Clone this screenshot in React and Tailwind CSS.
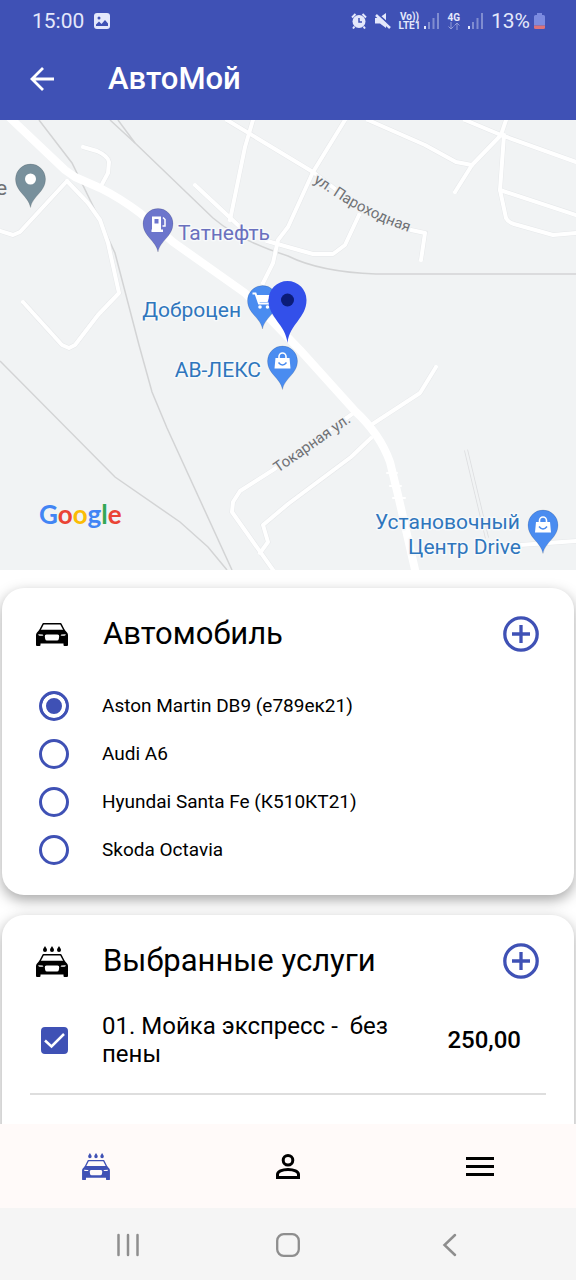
import React, { useState } from 'react';

const cars = [
  { id: 1, name: 'Aston Martin DB9 (е789ек21)' },
  { id: 2, name: 'Audi A6' },
  { id: 3, name: 'Hyundai Santa Fe (К510КТ21)' },
  { id: 4, name: 'Skoda Octavia' },
];

const services = [{ id: 1, name: '01. Мойка экспресс -  без пены', price: '250,00' }];

// Второстепенные улицы на карте
const roads = [
  'M67 61L20 112L13 115L0 111',
  'M67 61L88 83L100 100L108 123L119 173L98 195L75 225L69 228L62 225L23 182',
  'M83 27L97 31Q108 36 109 42L108 53L101 66',
  'M253 0L245 27L230 100',
  'M195 65L240 107M267 121L288 127L313 134L333 134L345 125L359 95',
  'M227 0L313 52L360 88L411 110L425 113L421 140',
  'M345 0L313 52L288 107L278 120L273 143L263 163',
  'M368 0L425 25L456 42L472 45',
  'M506 0L501 15L472 45L455 72',
  'M465 0L501 15L576 42',
  'M504 15L500 70L506 98Q508 102 514 104L553 115L576 113',
  'M500 70L576 95',
  'M436 247L420 273L371 305',
  'M371 318L351 337L288 384L263 405L268 422L260 433',
  'M355 292L273 350L240 371L233 382L232 392L273 450',
  'M520 425L576 421',
];

// Железная дорога
const rails = [
  'M39 0L72 43L95 90L115 133L139 225L152 272L167 308L232 450',
  'M110 0L135 23L213 98Q240 121 288 136Q320 152 376 154L576 154',
  'M118 0L135 23',
  'M0 241L115 357L180 402L208 427L227 450',
];

function CarShape() {
  return (
    <>
      <path d="M7.200 0.800H24.800L28.500 8H3.500Z" fill="none" stroke="currentColor" strokeWidth="1.500" strokeLinejoin="round" />
      <path
        fillRule="evenodd"
        fill="currentColor"
        d="M3.500 6.800H28.500L31 9.500Q32 10.500 32 12V22Q32 23 31 23H28.500Q27.500 23 27.500 22V20.500H4.500V22Q4.500 23 3.500 23H1Q0 23 0 22V12Q0 10.500 1 9.500ZM2.200 11.200L2.800 12.600Q5 13 7.300 12.600Q7.500 11.800 6.500 11.400ZM29.800 11.200L29.200 12.600Q27 13 24.700 12.600Q24.500 11.800 25.500 11.400ZM10.500 11.500Q8.600 11.500 8.800 13.500L9.200 16Q9.500 17.500 11 17.500H21Q22.500 17.500 22.800 16L23.200 13.500Q23.400 11.500 21.500 11.500Z"
      />
    </>
  );
}

function CarIcon({ className }) {
  return (
    <svg viewBox="0 0 32 23" className={className} aria-hidden="true">
      <CarShape />
    </svg>
  );
}

function WashIcon({ className }) {
  return (
    <svg viewBox="0 0 32 31" className={className} aria-hidden="true">
      {[9, 16, 23].map((x) => (
        <path key={x} transform={`translate(${x} 0)`} fill="currentColor" d="M0 0C0.600 1.300 2 2.500 2 3.900A2 2 0 0 1-2 3.900C-2 2.500-0.600 1.300 0 0Z" />
      ))}
      <g transform="translate(0 8)">
        <CarShape />
      </g>
    </svg>
  );
}

function SignalIcon() {
  return (
    <svg viewBox="0 0 15 16" className="h-4 w-[15px]" fill="currentColor" aria-hidden="true">
      <path d="M0 13h2v3H0z" />
      <path d="M4 9h2v7H4zM8.500 5h2v11h-2zM13 0h2v16h-2z" opacity="0.400" />
    </svg>
  );
}

function StatusBar() {
  return (
    <div className="flex h-[42px] items-center justify-between pr-[31px] pl-8 text-[#e4e8fb]">
      <div className="flex items-center gap-[10px]">
        <span className="text-[21px] leading-6">15:00</span>
        <svg viewBox="0 0 16 16" className="size-4" aria-hidden="true">
          <rect width="16" height="16" rx="3" fill="currentColor" />
          <circle cx="5" cy="5" r="1.500" fill="#3f51b5" />
          <path d="M2 13V11.500L5 8.500L7.500 11L11 7L14 10.500V13Z" fill="#3f51b5" />
        </svg>
      </div>
      <div className="flex items-center gap-2">
        <svg viewBox="0 0 16 16" className="size-4" aria-hidden="true">
          <path d="M1 4.500L4.500 1M15 4.500L11.500 1M3.500 13.500L2 15.500M12.500 13.500L14 15.500" stroke="currentColor" strokeWidth="2" />
          <circle cx="8" cy="8.500" r="6.500" fill="currentColor" />
          <path d="M8 5V9H11" fill="none" stroke="#3f51b5" strokeWidth="1.500" />
        </svg>
        <svg viewBox="0 0 16 16" className="size-4" aria-hidden="true">
          <path d="M0 5H4L11 0V15L5 10.500H0Z" fill="currentColor" />
          <path d="M2 0.500L16 13" stroke="#3f51b5" strokeWidth="2" />
          <path d="M1 2L15 15" stroke="currentColor" strokeWidth="2.500" />
        </svg>
        <div className="flex items-center gap-1">
          <div className="flex flex-col items-center text-[10px] leading-[9px] font-bold">
            <span>Vo))</span>
            <span>LTE1</span>
          </div>
          <SignalIcon />
        </div>
        <div className="flex flex-col items-center text-[10px] leading-[9px] font-bold">
          <span>4G</span>
          <svg viewBox="0 0 12 8" className="h-2 w-3" fill="none" stroke="currentColor" opacity="0.500" aria-hidden="true">
            <path d="M3 0V7M0.500 4.500L3 7L5.500 4.500M9 8V1M6.500 3.500L9 1L11.500 3.500" />
          </svg>
        </div>
        <SignalIcon />
        <div className="flex items-center gap-1">
          <span className="text-[21px] leading-6">13%</span>
          <svg viewBox="0 0 11 16" className="h-4 w-[11px]" aria-hidden="true">
            <path d="M3 0H8V2H9.500Q11 2 11 3.500V12.500H0V3.500Q0 2 1.500 2H3Z" fill="#7c8be0" />
            <path d="M0 12.500H11V14.500Q11 16 9.500 16H1.500Q0 16 0 14.500Z" fill="#dd7378" />
          </svg>
        </div>
      </div>
    </div>
  );
}

function Pin({ x, y, color, children }) {
  return (
    <g transform={`translate(${x} ${y})`}>
      <path
        d="M0 28.500C-2 17-15 13-15 0A15 15 0 1 1 15 0C15 13 2 17 0 28.500Z"
        fill={color}
        stroke="#000"
        strokeOpacity="0.150"
        strokeWidth="0.800"
      />
      {children}
    </g>
  );
}

function Bag() {
  return (
    <>
      <path d="M-3.500-3V-4.500A3.500 3.500 0 0 1 3.500-4.500V-3" fill="none" stroke="#fff" strokeWidth="1.600" />
      <path d="M-7-3H7L8 7.500H-8Z" fill="#fff" />
      <path d="M-4 1.500Q0 6.500 4 1.500" fill="none" stroke="#4a8cf0" strokeWidth="1.500" />
    </>
  );
}

function Map() {
  return (
    <svg viewBox="0 0 576 450" className="block w-full bg-[#f1f3f4]" role="img" aria-label="Карта">
      <g fill="none" stroke="#d3d4d5" strokeWidth="1.500">
        {rails.map((d) => (
          <path key={d} d={d} />
        ))}
      </g>
      <g fill="none" stroke="#e6e8ea" strokeWidth="5">
        {roads.map((d) => (
          <path key={d} d={d} />
        ))}
        <path d="M466 330L487 418" stroke="#dcdddf" strokeWidth="4" />
      </g>
      <g fill="none" stroke="#fff" strokeWidth="4" strokeLinecap="round" strokeLinejoin="round">
        {roads.map((d) => (
          <path key={d} d={d} />
        ))}
        <path d="M466 330L487 418" stroke="#f1f3f4" strokeWidth="2.500" />
        <path d="M8-4L65 50L75 57L100 68Q120 78 140 93L173 122L245 173L300 230L355 291Q380 314 390 342L398 375L416 454" strokeWidth="8" />
        <path d="M387 353h10M390 366h11M393 378h12" strokeWidth="2" />
      </g>

      <path id="parohodnaya" d="M313 62L339 79Q373 101 421 116" fill="none" />
      <g fontSize="15" fill="#6f7174" stroke="#f1f3f4" strokeWidth="3" strokeLinejoin="round" className="[paint-order:stroke]">
        <text>
          <textPath href="#parohodnaya">ул. Пароходная</textPath>
        </text>
        <text transform="translate(278 353) rotate(-35)">Токарная ул.</text>
        <text x="-4" y="75" fontSize="21">е</text>
      </g>

      <g fontSize="21" fill="#2f76bd" stroke="#f7f9fa" strokeWidth="3" strokeLinejoin="round" className="[paint-order:stroke]">
        <text x="178" y="120" fill="#6a70be">Татнефть</text>
        <text x="241" y="197" textAnchor="end">Доброцен</text>
        <text x="261" y="257" textAnchor="end">АВ-ЛЕКС</text>
        <text x="520" y="409" textAnchor="end">Установочный</text>
        <text x="521" y="434" textAnchor="end">Центр Drive</text>
      </g>

      <Pin x={30.5} y={59} color="#78909c">
        <circle r="5.500" fill="#fff" />
      </Pin>
      <Pin x={158} y={103.500} color="#6c75cc">
        <path fillRule="evenodd" fill="#fff" d="M-6-7H3V6H5V8.500H-6.500V6H-6ZM-3.500-4.500V0H0.500V-4.500Z" />
        <path d="M5-6L7-4V2.500H4.500" fill="none" stroke="#fff" strokeWidth="1.500" />
      </Pin>
      <Pin x={262.500} y={180.500} color="#4a8cf0">
        <path d="M-10-7H-7L-3.500 3H7" fill="none" stroke="#fff" strokeWidth="2" />
        <path d="M-6.500-5.500H8L5 1.500H-4Z" fill="#fff" />
        <circle cx="-2.500" cy="6.500" r="1.800" fill="#fff" />
        <circle cx="5" cy="6.500" r="1.800" fill="#fff" />
      </Pin>
      <Pin x={282.500} y={241} color="#4a8cf0">
        <Bag />
      </Pin>
      <Pin x={543} y={405} color="#4a8cf0">
        <Bag />
      </Pin>
      <g transform="translate(287.500 180)">
        <path d="M0 43C-2 24-19 18-19 0A19 19 0 1 1 19 0C19 18 2 24 0 43Z" fill="#3350ea" />
        <circle r="6.500" fill="#0b1c78" />
      </g>

      <text x="39" y="404" fontSize="26" fontWeight="700" className="font-['Lato',sans-serif]">
        <tspan fill="#4285f4">G</tspan>
        <tspan fill="#ea4335">o</tspan>
        <tspan fill="#fbbc05">o</tspan>
        <tspan fill="#4285f4">g</tspan>
        <tspan fill="#34a853">l</tspan>
        <tspan fill="#ea4335">e</tspan>
      </text>
    </svg>
  );
}

function Card({ icon, title, addLabel, children }) {
  return (
    <section className="mx-[2px] rounded-[22px] bg-white px-7 pt-7 shadow-[0_5px_14px_rgba(0,0,0,0.350)]">
      <div className="flex items-center gap-[35px] pr-[7px] pb-[30px] pl-[6px]">
        {icon}
        <h2 className="flex-1 text-[31px] leading-9">{title}</h2>
        <button type="button" aria-label={addLabel} className="text-[#3f51b5]">
          <svg viewBox="0 0 36 36" className="size-9" fill="none" stroke="currentColor" strokeWidth="3.300" aria-hidden="true">
            <circle cx="18" cy="18" r="16.200" />
            <path d="M18 9V27M9 18H27" />
          </svg>
        </button>
      </div>
      {children}
    </section>
  );
}

export default function App() {
  const [carId, setCarId] = useState(1);
  const [selected, setSelected] = useState([1]);

  const toggleService = (id) => {
    setSelected(selected.includes(id) ? selected.filter((s) => s !== id) : [...selected, id]);
  };

  return (
    <div className="flex h-dvh flex-col bg-white font-['Roboto',sans-serif] text-black">
      {/* Шапка */}
      <header className="bg-[#3f51b5] text-white">
        <StatusBar />
        <div className="flex h-[78px] items-center gap-[54px] px-[30px] pb-1">
          <button type="button" aria-label="Назад">
            <svg viewBox="0 0 24 24" className="size-6" fill="none" stroke="currentColor" strokeWidth="2.800" aria-hidden="true">
              <path d="M24 12H2M13 1L2 12L13 23" />
            </svg>
          </button>
          <h1 className="text-[31px] leading-9 font-medium">АвтоМой</h1>
        </div>
      </header>

      <main className="min-h-0 flex-1 overflow-y-auto [scrollbar-width:none]">
        <Map />

        <div className="flex flex-col gap-5 pt-[18px]">
          {/* Автомобиль */}
          <Card icon={<CarIcon className="h-[23px] w-8" />} title="Автомобиль" addLabel="Добавить автомобиль">
            <div className="pb-[21px]">
              {cars.map((car) => (
                <label key={car.id} className="flex h-12 items-center gap-[33px] pl-[9px] text-[19px] leading-6">
                  <input
                    type="radio"
                    name="car"
                    checked={carId === car.id}
                    onChange={() => setCarId(car.id)}
                    className="size-[30px] appearance-none rounded-full border-[3px] border-[#3f51b5] checked:bg-[#3f51b5] checked:shadow-[inset_0_0_0_4px_white]"
                  />
                  {car.name}
                </label>
              ))}
            </div>
          </Card>

          {/* Выбранные услуги */}
          <Card icon={<WashIcon className="h-[31px] w-8" />} title="Выбранные услуги" addLabel="Добавить услугу">
            <ul className="pb-20">
              {services.map((service) => (
                <li key={service.id} className="border-b-2 border-[#dedede] pt-[3px] pb-[25px]">
                  <label className="flex items-center gap-[34px] pr-[25px] pl-[11px] text-2xl leading-7">
                    <span className="grid size-[27px] shrink-0">
                      <input
                        type="checkbox"
                        checked={selected.includes(service.id)}
                        onChange={() => toggleService(service.id)}
                        className="peer col-start-1 row-start-1 size-[27px] appearance-none rounded border-[3px] border-[#3f51b5] checked:bg-[#3f51b5]"
                      />
                      <svg
                        viewBox="0 0 27 27"
                        className="pointer-events-none invisible col-start-1 row-start-1 size-[27px] peer-checked:visible"
                        fill="none"
                        stroke="#fff"
                        strokeWidth="2.500"
                        aria-hidden="true"
                      >
                        <path d="M4 13.500L10.500 19.500L23 7" />
                      </svg>
                    </span>
                    <span className="flex-1 pr-2 whitespace-pre-wrap">{service.name}</span>
                    <span className="font-medium">{service.price}</span>
                  </label>
                </li>
              ))}
            </ul>
          </Card>
        </div>
      </main>

      {/* Нижнее меню */}
      <nav className="relative grid h-[84px] grid-cols-3 place-items-center bg-[#fffaf9]">
        <button type="button" aria-label="Мойка" className="text-[#3f51b5]">
          <WashIcon className="h-[27px] w-7" />
        </button>
        <button type="button" aria-label="Профиль">
          <svg viewBox="0 0 24 25" className="h-[25px] w-6" fill="none" stroke="currentColor" strokeWidth="3" aria-hidden="true">
            <circle cx="12" cy="6.300" r="4.800" />
            <path d="M1.500 23.500V20.500C1.500 17.500 6 15.500 12 15.500S22.500 17.500 22.500 20.500V23.500Z" />
          </svg>
        </button>
        <button type="button" aria-label="Меню">
          <svg viewBox="0 0 28 19" className="h-[19px] w-7" fill="none" stroke="currentColor" strokeWidth="3" aria-hidden="true">
            <path d="M0 1.500H28M0 9.500H28M0 17.500H28" />
          </svg>
        </button>
      </nav>

      <div className="grid h-[72px] grid-cols-3 place-items-center bg-[#f5f5f5] px-12 pt-[2px] text-[#8e8e8e]">
        <button type="button" aria-label="Недавние">
          <svg viewBox="0 0 24 24" className="size-6" fill="none" stroke="currentColor" strokeWidth="2.500" strokeLinecap="round" aria-hidden="true">
            <path d="M2.500 2V22M12 2V22M21.500 2V22" />
          </svg>
        </button>
        <button type="button" aria-label="Домой">
          <svg viewBox="0 0 24 24" className="size-6" fill="none" stroke="currentColor" strokeWidth="2.300" aria-hidden="true">
            <rect x="1.200" y="1.200" width="21.600" height="21.600" rx="6.500" />
          </svg>
        </button>
        <button type="button" aria-label="Назад">
          <svg viewBox="0 0 24 24" className="size-6" fill="none" stroke="currentColor" strokeWidth="2.500" strokeLinecap="round" aria-hidden="true">
            <path d="M19 2L8.500 12L19 22" />
          </svg>
        </button>
      </div>
    </div>
  );
}
